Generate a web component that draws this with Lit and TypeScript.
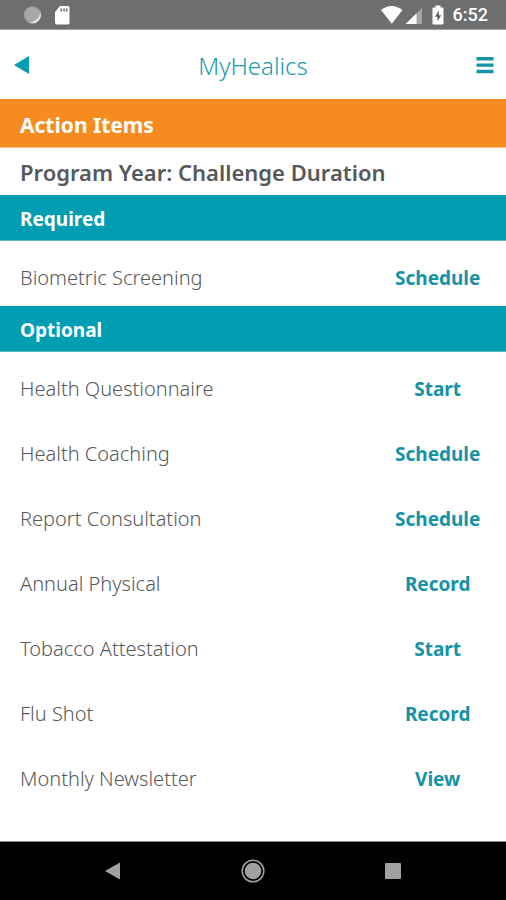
import { LitElement, html, css } from "lit";
import { customElement, property } from "lit/decorators.js";

interface Task {
  name: string;
  action: string;
}

const required: Task[] = [{ name: "Biometric Screening", action: "Schedule" }];

const optional: Task[] = [
  { name: "Health Questionnaire", action: "Start" },
  { name: "Health Coaching", action: "Schedule" },
  { name: "Report Consultation", action: "Schedule" },
  { name: "Annual Physical", action: "Record" },
  { name: "Tobacco Attestation", action: "Start" },
  { name: "Flu Shot", action: "Record" },
  { name: "Monthly Newsletter", action: "View" },
];

@customElement("status-bar")
class StatusBar extends LitElement {
  static styles = css`
    :host {
      display: flex;
      align-items: center;
      justify-content: space-between;
      box-sizing: border-box;
      height: 30px;
      padding: 0 18px 0 23px;
      background: #6d6e70;
      border-bottom: 1px solid #a0a0a2;
      color: #fff;
      font: 500 18px/30px Roboto, sans-serif;
    }
    .group {
      display: flex;
      align-items: center;
    }
    .left {
      gap: 12px;
    }
    .clock {
      margin-left: 9px;
    }
    svg {
      display: block;
    }
  `;
  render() {
    return html`
      <div class="group left">
        <svg width="19" height="20" viewBox="0 0 19 20" aria-hidden="true">
          <circle cx="9.5" cy="10" r="8.8" fill="#9b9b9c" />
          <circle cx="9.2" cy="9.4" r="7.4" fill="#a8a8a8" />
          <path d="M17.500 7.500A8.500 8.500 0 0 1 6 17.600Q15 16.500 17.500 7.500Z" fill="#e4e4e4" />
        </svg>
        <svg width="16" height="20" viewBox="0 0 16 20" aria-hidden="true">
          <path d="M6 1H14Q15.500 1 15.500 2.500V17.500Q15.500 19.500 14 19.500H3Q1 19.500 1 17.500V7Z" fill="#fff" />
          <path d="M6.500 3.500h1.600v3h-1.600zM9.300 3.500h1.600v3h-1.600zM12 3.500h1.500v3h-1.500z" fill="#6d6e70" />
        </svg>
      </div>
      <div class="group">
        <svg width="57" height="20" viewBox="0 0 57 20" role="img" aria-label="Wi-Fi and mobile signal">
          <path d="M6 5Q16.500-3 27.500 5L16.800 18.800Z" fill="#fff" />
          <path d="M47 3V19H30.500Z" fill="#a6a6a7" />
          <path d="M41.500 8.400V19H30.500Z" fill="#fff" />
        </svg>
        <svg width="12" height="20" viewBox="0 0 12 20" role="img" aria-label="Battery charging">
          <path d="M3.500 .5h5v2H10.500Q11.500 2.500 11.500 3.500V18.500Q11.500 19.500 10.500 19.500H1.500Q.5 19.500 .5 18.500V3.500Q.5 2.500 1.500 2.500H3.500Z" fill="#fff" />
          <path d="M6.800 5.500L3 11.700H5.500V16.500L9.200 10.200H6.800Z" fill="#5d5e60" />
        </svg>
        <span class="clock">6:52</span>
      </div>
    `;
  }
}

@customElement("task-list")
class TaskList extends LitElement {
  @property() heading = "";
  @property({ attribute: false }) tasks: Task[] = [];

  static styles = css`
    :host {
      display: block;
    }
    .heading {
      margin: 0;
      padding: 4px 20px 0;
      background: #009db3;
      border-bottom: 1px solid #5cb9c8;
      color: #fff;
      font-size: 19px;
      font-weight: 700;
      line-height: 41px;
    }
    .list {
      margin: 0;
      padding: 0;
      list-style: none;
    }
    .row {
      display: grid;
      grid-template-columns: 73fr 27fr;
      align-items: center;
      height: 65px;
      padding-top: 8px;
      box-sizing: border-box;
    }
    .name {
      padding-left: 20px;
      color: #58595b;
      font-size: 20px;
      font-weight: 300;
      line-height: 24px;
    }
    .action {
      justify-self: center;
      padding: 0;
      border: 0;
      background: none;
      color: #1593a6;
      font: inherit;
      font-size: 19px;
      font-weight: 700;
      line-height: 24px;
      cursor: pointer;
    }
  `;
  render() {
    return html`
      <h3 class="heading">${this.heading}</h3>
      <ul class="list">
        ${this.tasks.map(
          (task) => html`<li class="row">
            <span class="name">${task.name}</span>
            <button class="action" aria-label="${task.action} ${task.name}">${task.action}</button>
          </li>`
        )}
      </ul>
    `;
  }
}

@customElement("app-root")
class AppRoot extends LitElement {
  static styles = css`
    :host {
      display: flex;
      flex-direction: column;
      min-height: 100vh;
      background: #fff;
      font-family: "Noto Sans", "Open Sans", sans-serif;
    }
    .header {
      display: grid;
      grid-template-columns: 1fr auto 1fr;
      align-items: center;
      height: 69px;
      padding: 0 12px;
    }
    .title {
      margin: 0;
      padding-top: 2px;
      color: #1a9bae;
      font-size: 24px;
      font-weight: 300;
      line-height: 32px;
    }
    .icon {
      display: grid;
      place-items: center;
      padding: 0;
      border: 0;
      background: none;
      cursor: pointer;
    }
    .back {
      justify-self: start;
    }
    .menu {
      justify-self: end;
    }
    .banner {
      margin: 0;
      padding: 4px 20px 0;
      background: #f68b1f;
      border-bottom: 1px solid #fac58d;
      color: #fff;
      font-size: 21px;
      font-weight: 700;
      line-height: 44px;
    }
    .year {
      margin: 0;
      padding: 2px 20px 0;
      color: #58595b;
      font-size: 22px;
      font-weight: 600;
      line-height: 45px;
    }
    .main {
      flex: 1;
    }
    .nav {
      display: grid;
      grid-template-columns: repeat(3, 1fr);
      padding: 0 43px;
      height: 58px;
      border-top: 1px solid #8a8a8a;
      background: #000;
    }
  `;
  render() {
    return html`
      <status-bar></status-bar>
      <header class="header">
        <button class="icon back" aria-label="Back">
          <svg width="18" height="20" viewBox="0 0 18 20"><path d="M2 10L17 1V19Z" fill="#009db3" /></svg>
        </button>
        <h1 class="title">MyHealics</h1>
        <button class="icon menu" aria-label="Menu">
          <svg width="18" height="20" viewBox="0 0 18 20">
            <path d="M.5 2h17v3.500h-17zM.5 8.500h17v3.300h-17zM.5 14.800h17v3.500h-17z" fill="#1593a6" />
          </svg>
        </button>
      </header>
      <main class="main">
        <h2 class="banner">Action Items</h2>
        <p class="year">Program Year: Challenge Duration</p>
        <task-list heading="Required" .tasks=${required}></task-list>
        <task-list heading="Optional" .tasks=${optional}></task-list>
      </main>
      <nav class="nav">
        <button class="icon" aria-label="System back">
          <svg width="24" height="24" viewBox="0 0 24 24"><path d="M4 12L19 3.500V20.500Z" fill="#a0a0a0" /></svg>
        </button>
        <button class="icon" aria-label="Home">
          <svg width="24" height="24" viewBox="0 0 24 24">
            <circle cx="12" cy="12" r="10.800" fill="none" stroke="#a0a0a0" stroke-width="1.500" />
            <circle cx="12" cy="12" r="8.300" fill="#a0a0a0" />
          </svg>
        </button>
        <button class="icon" aria-label="Recent apps">
          <svg width="24" height="24" viewBox="0 0 24 24"><rect x="4" y="4" width="16" height="16" rx="1" fill="#a0a0a0" /></svg>
        </button>
      </nav>
    `;
  }
}
